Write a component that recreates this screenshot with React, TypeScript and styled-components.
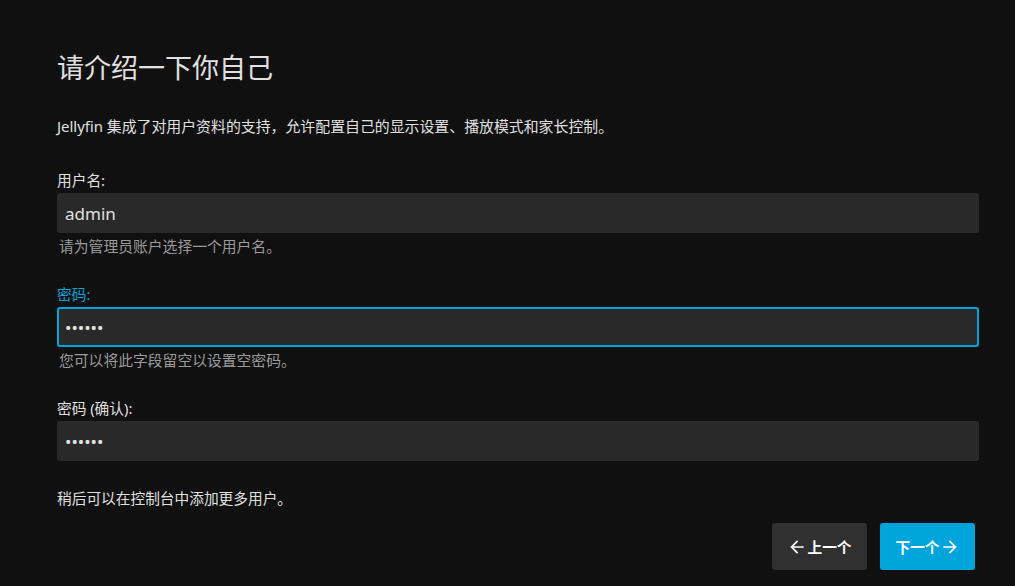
import * as React from "react";
import styled, { createGlobalStyle } from "styled-components";

const Colors = {
  Background: "#101010",
  Text: "#e0e0e0",
  Muted: "#9a9a9a",
  Field: "#292929",
  Accent: "#00a4dc",
  Secondary: "#303030",
};

const GlobalStyle = createGlobalStyle`
  html, body {
    margin: 0;
    padding: 0;
    background-color: ${Colors.Background};
  }
  body {
    font-family: "Noto Sans", "Noto Sans CJK SC", sans-serif;
    color: ${Colors.Text};
  }
`;

const Page = styled.div`
  min-height: 100vh;
  box-sizing: border-box;
  padding: 52px 36px 0 57px;
`;

const Title = styled.h1`
  margin: 0;
  font-size: 27px;
  font-weight: 400;
  line-height: 32px;
`;

const Intro = styled.p`
  margin: 32px 0 34px;
  font-size: 14.9px;
  line-height: 20px;
`;

const Field = styled.div`
  display: flex;
  flex-direction: column;
  margin-bottom: 28px;
`;

const Label = styled.label<{ $active?: boolean }>`
  font-size: 14.7px;
  line-height: 20px;
  margin-bottom: 3px;
  color: ${(p) => (p.$active ? Colors.Accent : Colors.Text)};
`;

const Input = styled.input<{ $active?: boolean }>`
  box-sizing: border-box;
  height: 40px;
  width: 100%;
  padding: 0 6px;
  border: 2px solid ${(p) => (p.$active ? Colors.Accent : "transparent")};
  border-radius: 3px;
  background-color: ${Colors.Field};
  color: ${Colors.Text};
  font-family: "Noto Sans", "Noto Sans CJK SC", sans-serif;
  font-size: 17px;
  outline: none;
`;

const Help = styled.div`
  font-size: 14.8px;
  line-height: 20px;
  margin-top: 3px;
  padding-left: 2px;
  color: ${Colors.Muted};
`;

const Footer = styled.p`
  margin: -1px 0 15px;
  font-size: 14.7px;
  line-height: 20px;
`;

const Buttons = styled.div`
  display: flex;
  justify-content: flex-end;
  gap: 13px;
  padding-right: 4px;
`;

const Button = styled.button<{ $primary?: boolean }>`
  display: flex;
  align-items: center;
  justify-content: center;
  gap: 0;
  width: 95px;
  height: 47px;
  border: none;
  border-radius: 3px;
  background-color: ${(p) => (p.$primary ? Colors.Accent : Colors.Secondary)};
  color: #fff;
  font-family: "Noto Sans", "Noto Sans CJK SC", sans-serif;
  font-size: 14.7px;
  font-weight: 700;
  cursor: pointer;
`;

const Arrow = ({ back }: { back?: boolean }) => (
  <svg width="20" height="20" viewBox="0 0 24 24" fill="currentColor">
    {back ? (
      <path d="M20 11H7.83l5.59-5.59L12 4l-8 8 8 8 1.41-1.41L7.83 13H20v-2z" />
    ) : (
      <path d="M4 11h12.17l-5.59-5.59L12 4l8 8-8 8-1.41-1.41L16.17 13H4v-2z" />
    )}
  </svg>
);

export default function App() {
  return (
    <Page>
      <GlobalStyle />
      <Title>请介绍一下你自己</Title>
      <Intro>Jellyfin 集成了对用户资料的支持，允许配置自己的显示设置、播放模式和家长控制。</Intro>
      <Field>
        <Label>用户名:</Label>
        <Input type="text" defaultValue="admin" />
        <Help>请为管理员账户选择一个用户名。</Help>
      </Field>
      <Field>
        <Label $active>密码:</Label>
        <Input $active type="password" defaultValue="123456" />
        <Help>您可以将此字段留空以设置空密码。</Help>
      </Field>
      <Field>
        <Label>密码 (确认):</Label>
        <Input type="password" defaultValue="123456" />
      </Field>
      <Footer>稍后可以在控制台中添加更多用户。</Footer>
      <Buttons>
        <Button>
          <Arrow back />
          上一个
        </Button>
        <Button $primary>
          下一个
          <Arrow />
        </Button>
      </Buttons>
    </Page>
  );
}
